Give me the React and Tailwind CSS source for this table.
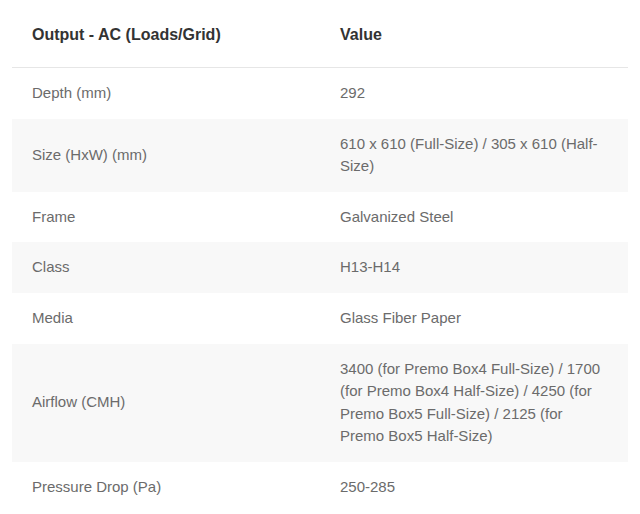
import React from "react";

const rows = [
  { label: "Depth (mm)", value: "292" },
  { label: "Size (HxW) (mm)", value: "610 x 610 (Full-Size) / 305 x 610 (Half-Size)" },
  { label: "Frame", value: "Galvanized Steel" },
  { label: "Class", value: "H13-H14" },
  { label: "Media", value: "Glass Fiber Paper" },
  {
    label: "Airflow (CMH)",
    value:
      "3400 (for Premo Box4 Full-Size) / 1700 (for Premo Box4 Half-Size) / 4250 (for Premo Box5 Full-Size) / 2125 (for Premo Box5 Half-Size)",
  },
  { label: "Pressure Drop (Pa)", value: "250-285" },
];

export default function App() {
  return (
    <div className="w-[640px] h-[514px] overflow-hidden bg-white px-3 font-['Liberation_Sans',Arial,sans-serif]">
      <table className="w-full table-fixed border-collapse">
        <thead>
          <tr className="border-b border-[#e6e6e6]">
            <th className="w-1/2 px-5 pt-[23px] pb-[20px] text-left text-base leading-6 font-bold text-[#333]">
              Output - AC (Loads/Grid)
            </th>
            <th className="w-1/2 px-5 pt-[23px] pb-[20px] text-left text-base leading-6 font-bold text-[#333]">
              Value
            </th>
          </tr>
        </thead>
        <tbody>
          {rows.map((row, i) => (
            <tr key={row.label} className={i % 2 === 1 ? "bg-[#f8f8f8]" : "bg-white"}>
              <td className="px-5 py-3.5 align-middle text-[15px] leading-[22.6px] text-[#6b6b6b]">
                {row.label}
              </td>
              <td className="px-5 py-3.5 align-middle text-[15px] leading-[22.6px] text-[#6b6b6b]">
                {row.value}
              </td>
            </tr>
          ))}
        </tbody>
      </table>
    </div>
  );
}
